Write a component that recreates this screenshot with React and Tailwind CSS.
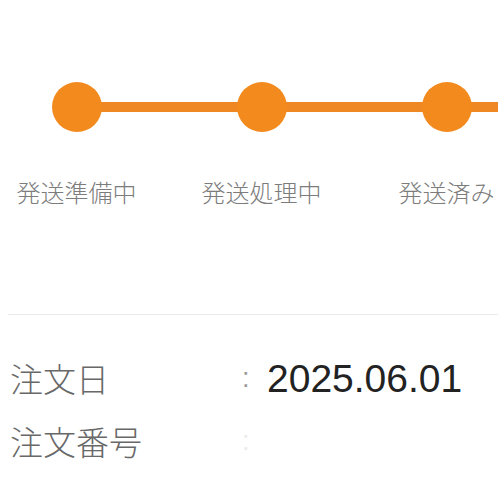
import React from 'react';

const steps = ['発送準備中', '発送処理中', '発送済み'];

const details = [
  { label: '注文日', value: '2025.06.01' },
  { label: '注文番号', value: '' },
];

function Stepper() {
  return (
    <div className="relative ml-[-16px] flex pt-[82px]">
      {/* connector behind the dots */}
      <div className="absolute left-[92px] right-0 top-[102px] h-[10px] bg-[#ef8722]" />
      {steps.map((step) => (
        <div key={step} className="relative flex w-[185px] shrink-0 flex-col items-center">
          <div className="h-[50px] w-[50px] rounded-full bg-[#f28a1e]" />
          <span className="mt-[48px] whitespace-nowrap text-[24px] font-light leading-none text-[#7c7c7c]">
            {step}
          </span>
        </div>
      ))}
    </div>
  );
}

export default function App() {
  return (
    <div className="h-[498px] w-[498px] overflow-hidden bg-white font-['Noto_Sans_CJK_JP',sans-serif]">
      <Stepper />

      <div className="ml-2 mt-[110px] h-px bg-[#ececec]" />

      <div className="mt-[47px] flex flex-col gap-[30px] pl-[10px]">
        {details.map((row) => (
          <div key={row.label} className="flex h-[33px] items-center">
            <span className="w-[232px] text-[33px] font-light leading-none text-[#686868]">{row.label}</span>
            <span
              className={
                row.value
                  ? "w-[25px] font-['Liberation_Sans',sans-serif] text-[27px] leading-none text-[#9a9a9a]"
                  : "w-[25px] font-['Liberation_Sans',sans-serif] text-[27px] leading-none text-[#ececec]"
              }
            >
              :
            </span>
            <span className="font-['Liberation_Sans',sans-serif] text-[39px] leading-none text-[#222]">
              {row.value}
            </span>
          </div>
        ))}
      </div>
    </div>
  );
}
